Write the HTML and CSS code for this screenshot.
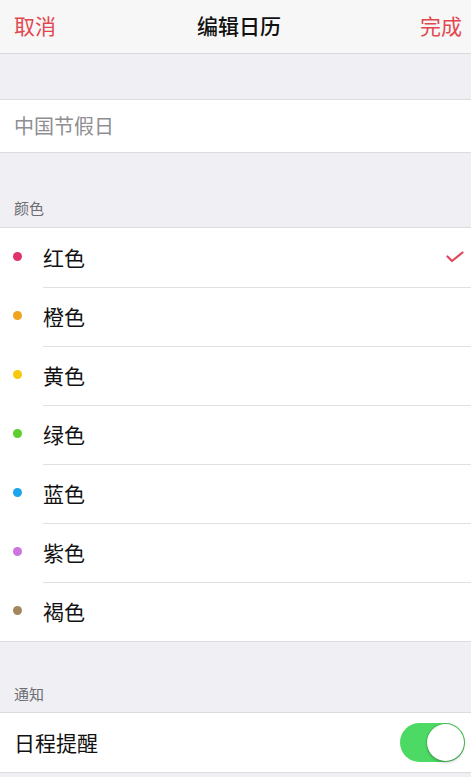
FILE: index.html
```html
<!DOCTYPE html>
<html lang="zh-CN">
<head>
<meta charset="utf-8">
<title>编辑日历</title>
<link rel="stylesheet" href="styles.css">
</head>
<body>
  <header class="navbar">
    <span class="nav-btn">取消</span>
    <span class="nav-title">编辑日历</span>
    <span class="nav-btn">完成</span>
  </header>

  <div class="spacer"></div>

  <section class="group">
    <div class="cell cell-name">中国节假日</div>
  </section>

  <div class="section-head">颜色</div>

  <section class="group">
    <div class="cell color-cell">
      <span class="dot dot-red"></span><span class="cell-text">红色</span>
      <svg class="check" width="18" height="12" viewBox="0 0 18 12"><path d="M1.5 5.5 L6 10 L16.5 1.5" fill="none" stroke="#e2475a" stroke-width="2.2" stroke-linecap="round" stroke-linejoin="round"/></svg>
    </div>
    <div class="cell color-cell"><span class="dot dot-orange"></span><span class="cell-text">橙色</span></div>
    <div class="cell color-cell"><span class="dot dot-yellow"></span><span class="cell-text">黄色</span></div>
    <div class="cell color-cell"><span class="dot dot-green"></span><span class="cell-text">绿色</span></div>
    <div class="cell color-cell"><span class="dot dot-blue"></span><span class="cell-text">蓝色</span></div>
    <div class="cell color-cell"><span class="dot dot-purple"></span><span class="cell-text">紫色</span></div>
    <div class="cell color-cell"><span class="dot dot-brown"></span><span class="cell-text">褐色</span></div>
  </section>

  <div class="section-head section-head-short">通知</div>

  <section class="group">
    <div class="cell toggle-cell">
      <span class="toggle-label">日程提醒</span>
      <span class="switch"><span class="knob"></span></span>
    </div>
  </section>
</body>
</html>
```

FILE: styles.css
```css
* { box-sizing: border-box; }

html, body {
  margin: 0;
  padding: 0;
}

body {
  width: 471px;
  height: 777px;
  overflow: hidden;
  background: #efeff4;
  font-family: "Noto Sans CJK SC", "Noto Sans", sans-serif;
  color: #111;
}

.navbar {
  height: 54px;
  background: #f7f7f7;
  border-bottom: 1px solid #d9d9dc;
  display: flex;
  align-items: center;
  justify-content: space-between;
  padding: 0 9px 3px 14px;
}

.nav-btn {
  color: #e2474f;
  font-size: 21px;
}

.nav-title {
  font-size: 21px;
  font-weight: 500;
  color: #111;
  margin-left: 2px;
}

.spacer { height: 45px; }

.group {
  background: #fff;
  border-top: 1px solid #dcdce0;
  border-bottom: 1px solid #dcdce0;
}

.cell {
  display: flex;
  align-items: center;
}

.cell-name {
  height: 52px;
  padding-left: 14px;
  padding-bottom: 1px;
  font-size: 20px;
  color: #8e8e93;
}

.section-head {
  height: 74px;
  display: flex;
  align-items: flex-end;
  padding: 0 0 9px 14px;
  font-size: 15px;
  color: #6d6d72;
}

.section-head-short {
  height: 70px;
  padding-bottom: 8px;
}

.color-cell {
  height: 59px;
  padding-left: 13px;
  padding-bottom: 2px;
  position: relative;
}

/* inset hairline between colour rows */
.color-cell + .color-cell::before {
  content: "";
  position: absolute;
  left: 43px;
  right: 0;
  top: 0;
  height: 1px;
  background: #e0e0e3;
}

.dot {
  width: 9px;
  height: 9px;
  border-radius: 50%;
  flex: none;
}

.dot-red { background: #e0336c; }
.dot-orange { background: #f0a31c; }
.dot-yellow { background: #f7c90a; }
.dot-green { background: #5ccf2c; }
.dot-blue { background: #1fa5ea; }
.dot-purple { background: #cd74df; }
.dot-brown { background: #a3875c; }

.cell-text {
  margin-left: 21px;
  font-size: 21px;
  color: #111;
}

.check {
  margin-left: auto;
  margin-right: 7px;
}

.toggle-cell {
  height: 59px;
  padding: 0 6px 1px 14px;
  justify-content: space-between;
}

.toggle-label {
  font-size: 21px;
  color: #111;
}

.switch {
  width: 65px;
  height: 39px;
  border-radius: 20px;
  background: #4cd964;
  position: relative;
  flex: none;
}

.knob {
  position: absolute;
  right: 1px;
  top: 1px;
  width: 37px;
  height: 37px;
  border-radius: 50%;
  background: #fff;
  box-shadow: 0 0 0 1px rgba(0, 0, 0, 0.12), 0 2px 3px rgba(0, 0, 0, 0.18);
}
```
